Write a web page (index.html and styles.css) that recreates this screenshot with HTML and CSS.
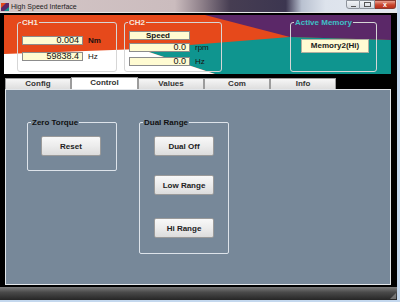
FILE: index.html
```html
<!DOCTYPE html>
<html lang="en">

<head>
    <meta charset="UTF-8">
    <title>High Speed Interface</title>
    <link rel="stylesheet" href="styles.css">
</head>

<body>
    <div class="window">
        <div class="titlebar">
            <svg class="app-icon" width="8" height="8" viewBox="0 0 8 8">
                <rect width="8" height="8" fill="#5b2868" />
                <polygon points="0,0 5,0 0,5" fill="#e6491b" />
                <polygon points="8,4 8,8 3,8" fill="#0f958f" />
            </svg>
            <span class="title">High Speed Interface</span>
            <div class="caption-buttons">
                <span class="cap min"></span>
                <span class="cap max"></span>
                <span class="cap close">x</span>
            </div>
        </div>
        <div class="client">
            <div class="header">
                <svg class="header-bg" viewBox="0 0 387 59" preserveAspectRatio="none">
                    <rect width="387" height="59" fill="#e6491b" />
                    <polygon points="201,0 387,0 387,25 286,22" fill="#5b2868" />
                    <polygon points="136,34 286,22 387,25 387,59 211,59" fill="#0f958f" />
                    <polygon points="0,39 136,34 211,59 0,59" fill="#ffffff" />
                </svg>
                <div class="header-content">
                    <fieldset class="group ch1">
                        <legend>CH1</legend>
                        <div class="group-body">
                            <div class="row">
                                <span class="field">0.004</span><span class="unit strong">Nm</span>
                            </div>
                            <div class="row second">
                                <span class="field">59838.4</span><span class="unit">Hz</span>
                            </div>
                        </div>
                    </fieldset>
                    <fieldset class="group ch2">
                        <legend>CH2</legend>
                        <div class="group-body">
                            <div class="row">
                                <span class="field center">Speed</span>
                            </div>
                            <div class="row rpm">
                                <span class="field">0.0</span><span class="unit">rpm</span>
                            </div>
                            <div class="row hz">
                                <span class="field">0.0</span><span class="unit">Hz</span>
                            </div>
                        </div>
                    </fieldset>
                    <fieldset class="group memory">
                        <legend>Active Memory</legend>
                        <div class="group-body">
                            <span class="memory-box">Memory2(Hi)</span>
                        </div>
                    </fieldset>
                </div>
            </div>
            <div class="tabs">
                <span class="tab">Config</span>
                <span class="tab active">Control</span>
                <span class="tab">Values</span>
                <span class="tab">Com</span>
                <span class="tab">Info</span>
            </div>
            <div class="panel">
                <fieldset class="box zero">
                    <legend>Zero Torque</legend>
                    <div class="group-body">
                        <button class="btn">Reset</button>
                    </div>
                </fieldset>
                <fieldset class="box dual">
                    <legend>Dual Range</legend>
                    <div class="group-body">
                        <button class="btn">Dual Off</button>
                        <button class="btn low">Low Range</button>
                        <button class="btn hi">Hi Range</button>
                    </div>
                </fieldset>
            </div>
        </div>
        <div class="statusbar"><span class="grip"></span></div>
    </div>
</body>

</html>
```

FILE: styles.css
```css
body {
    margin: 0;
    background: #c4d8ee;
    font-family: 'Liberation Sans', Arial, sans-serif;
    font-size: 8px;
    color: #1a1a1a;
}

.window {
    width: 397px;
    height: 300px;
    display: flex;
    flex-direction: column;
}

/* title bar */
.titlebar {
    height: 13px;
    display: flex;
    align-items: center;
    background: linear-gradient(90deg, #d4c6c6 0%, #cbbcbe 44%, #8c7e88 51%, #463d52 58%, #3c3650 72%, #b9c1d0 76%, #dde3ec 82%, #e4e9f0 100%);
    box-shadow: inset 0 -1px 0 #e6e6e6;
}

.app-icon {
    margin: 0 2px 0 1px;
}

.title {
    font-size: 7px;
    color: #1c1c1c;
}

.caption-buttons {
    margin-left: auto;
    margin-right: 1px;
    align-self: flex-start;
    display: flex;
}

.cap {
    height: 9px;
    box-sizing: border-box;
    border: 1px solid #8e949c;
    background: linear-gradient(#f2f4f7, #d4d9e0);
    display: flex;
    justify-content: center;
    align-items: center;
}

.cap.min {
    width: 14px;
    border-radius: 0 0 0 3px;
}

.cap.min::after {
    content: "";
    width: 5px;
    height: 1px;
    background: #555;
    margin-top: 3px;
}

.cap.max {
    width: 15px;
    border-left: none;
}

.cap.max::after {
    content: "";
    width: 5px;
    height: 3px;
    border: 1px solid #555;
}

.cap.close {
    width: 21px;
    border-left: none;
    border-color: #8a3a30;
    border-radius: 0 0 3px 0;
    background: linear-gradient(#e8a090, #c9452e 55%, #b8301c);
    color: #fff;
    font-size: 7px;
    font-weight: bold;
    line-height: 1;
}

/* client area */
.client {
    flex: 1;
    background: #000;
    padding: 2px 6px 2px 4px;
    display: flex;
    flex-direction: column;
}

.header {
    height: 59px;
    display: grid;
}

.header > * {
    grid-area: 1 / 1;
}

.header-bg {
    width: 387px;
    height: 59px;
    display: block;
}

.header-content {
    display: flex;
    align-items: flex-start;
    padding: 3px 14px 0 13px;
}

fieldset {
    margin: 0;
    padding: 0;
    min-width: 0;
    box-sizing: border-box;
    border: 1px solid #d6d6d6;
    border-radius: 3px;
}

legend {
    padding: 0 1px;
    margin-left: 3px;
    height: 9px;
    line-height: 9px;
    font-size: 8px;
    font-weight: bold;
}

.group {
    height: 54px;
}

.group.ch1 {
    width: 100px;
}

.group.ch1 .group-body {
    padding: 9px 0 0 4px;
}

.group.ch2 {
    width: 98px;
    margin-left: 7px;
}

.group.ch2 .group-body {
    padding: 4px 0 0 4px;
}

.group.memory {
    width: 87px;
    margin-left: auto;
}

.group.memory .group-body {
    padding: 12px 0 0 10px;
}

.group legend {
    color: #f6e4dc;
}

.group.memory legend {
    color: #3fc0c6;
}

.row {
    display: flex;
    align-items: center;
    height: 9px;
}

.row.second {
    margin-top: 7px;
}

.row.rpm {
    margin-top: 3px;
}

.row.hz {
    margin-top: 5px;
}

.field {
    width: 61px;
    height: 9px;
    box-sizing: border-box;
    border: 1px solid #8c8c8c;
    background: #fffbd2;
    font-size: 9px;
    line-height: 7px;
    text-align: right;
    padding-right: 3px;
    color: #111;
}

.field.center {
    text-align: center;
    font-size: 8px;
    font-weight: bold;
}

.unit {
    margin-left: 5px;
    font-size: 8px;
    color: #1a1010;
}

.unit.strong {
    font-weight: bold;
}

.memory-box {
    display: block;
    width: 68px;
    height: 14px;
    box-sizing: border-box;
    border: 1px solid #b0b0a0;
    background: #fffbd2;
    text-align: center;
    line-height: 12px;
    font-weight: bold;
}

/* tabs */
.tabs {
    height: 12px;
    margin: 3px 0 0 1px;
    display: flex;
    align-items: flex-end;
}

.tab {
    width: 66px;
    height: 11px;
    box-sizing: border-box;
    border: 1px solid #9c9c9c;
    border-bottom: none;
    background: linear-gradient(#f6f6f6, #dedede);
    text-align: center;
    line-height: 10px;
    font-weight: bold;
    color: #333;
}

.tab.active {
    height: 12px;
    background: #fff;
    width: 67px;
}

/* panel */
.panel {
    width: 386px;
    height: 196px;
    margin-left: 1px;
    box-sizing: border-box;
    border: 1px solid #e2e6ea;
    background: #778899;
    display: flex;
    align-items: flex-start;
    padding: 28px 0 0 21px;
}

.box {
    width: 90px;
    border-color: #dde3ea;
    border-radius: 2px;
}

.box legend {
    color: #111;
}

.box.zero {
    height: 53px;
}

.box.zero .group-body {
    padding: 9px 0 0 13px;
}

.box.dual {
    height: 136px;
    margin-left: 22px;
}

.box.dual .group-body {
    padding: 9px 0 0 14px;
}

.btn {
    display: block;
    width: 60px;
    height: 20px;
    margin: 0;
    padding: 0;
    border: 1px solid #9a9a9a;
    border-radius: 2px;
    background: linear-gradient(#f8f8f8, #ececec 50%, #dcdcdc);
    font-family: inherit;
    font-size: 8px;
    font-weight: bold;
    color: #222;
}

.btn.low {
    margin-top: 19px;
}

.btn.hi {
    margin-top: 23px;
}

/* status bar */
.statusbar {
    height: 13px;
    background: linear-gradient(#7c7c7c, #4a4a4a 40%, #262626);
    display: flex;
    justify-content: flex-end;
    align-items: flex-end;
}

.grip {
    width: 6px;
    height: 6px;
    margin: 0 1px 1px 0;
    background: radial-gradient(circle, #bbb 0.6px, transparent 0.8px) 0 0 / 2px 2px;
    clip-path: polygon(100% 0, 100% 100%, 0 100%);
}
```
